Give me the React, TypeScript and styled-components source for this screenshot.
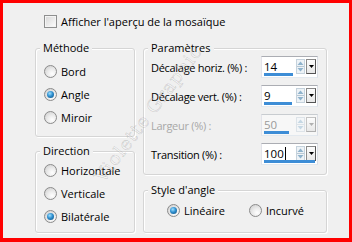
import React, {FC, ReactElement} from 'react';
import styled, {createGlobalStyle} from 'styled-components';

const GlobalStyle = createGlobalStyle`
html, body {
margin: 0;
padding: 0;
background: #f0f0f0;
}
* {
box-sizing: border-box;
}
`

const Frame = styled.div`
position: relative;
width: 352px;
height: 242px;
border: 3px solid #ff0000;
border-bottom-width: 4px;
background: #f0f0f0;
padding: 10px 0 0 32px;
overflow: hidden;
font-family: 'Open Sans', 'Noto Sans', sans-serif;
font-size: 11px;
color: #000;`

const TopRow = styled.label`
display: flex;
align-items: center;
gap: 4px;
height: 16px;
margin-left: 9px;`

const CheckBox = styled.span`
width: 13px;
height: 13px;
border: 1px solid #8e8f8f;
background: linear-gradient(135deg, #d6d6d6 0%, #f0f0f0 65%, #ffffff 100%);
box-shadow: inset 0 0 0 1px #f4f4f4;`

const Body = styled.div`
display: flex;
gap: 8px;
margin-top: 19px;`

const Column = styled.div<{$width: number; $gap: number}>`
display: flex;
flex-direction: column;
width: ${p => p.$width}px;
gap: ${p => p.$gap}px;`

const Group = styled.div<{$height: number; $pad: string}>`
position: relative;
flex-shrink: 0;
height: ${p => p.$height}px;
padding: ${p => p.$pad};
border: 1px solid #d5d5d5;
border-radius: 3px;
box-shadow: 1px 1px 0 #ffffff, inset 1px 1px 0 #ffffff;`

const GroupTitle = styled.span`
position: absolute;
top: -9px;
left: 4px;
padding: 0 3px;
line-height: 16px;
background: #f0f0f0;`

const RadioRow = styled.label<{$width?: number}>`
display: flex;
align-items: center;
gap: 4px;
height: 23px;
width: ${p => (p.$width ? `${p.$width}px` : 'auto')};`

const RadioCircle = styled.span<{$checked?: boolean}>`
position: relative;
width: 13px;
height: 13px;
border-radius: 50%;
border: 1px solid #8b8b8b;
background: radial-gradient(circle at 65% 70%, #ffffff 0%, #eaeaea 45%, #c9c9c9 100%);
flex-shrink: 0;

&::after {
content: '';
display: ${p => (p.$checked ? 'block' : 'none')};
position: absolute;
left: 2px;
top: 2px;
width: 7px;
height: 7px;
border-radius: 50%;
background: radial-gradient(circle at 40% 35%, #9fe0ff 0%, #2f8fcf 45%, #0b4a78 100%);
}`

const StyleRow = styled.div`
display: flex;`

const ParamGrid = styled.div`
display: grid;
grid-template-columns: 110px 57px;
row-gap: 7px;
align-items: center;`

const ParamLabel = styled.span<{$disabled?: boolean}>`
letter-spacing: -0.3px;
color: ${p => (p.$disabled ? '#a8a8a8' : '#000')};`

const SpinBox = styled.div<{$disabled?: boolean}>`
display: flex;
height: 22px;
border: 1px solid ${p => (p.$disabled ? '#c8ccd0' : '#abadb3')};
border-left-color: #e2e3ea;
border-right-color: #dbdfe6;
border-bottom-color: #e3e9ef;
background: ${p => (p.$disabled ? '#f7f7f7' : '#ffffff')};`

const ValueArea = styled.div<{$disabled?: boolean}>`
position: relative;
flex: 1;
padding: 3px 0 0 2px;
line-height: 14px;
font-size: 11.5px;
color: ${p => (p.$disabled ? '#9a9a9a' : '#000')};`

const Caret = styled.span`
display: inline-block;
width: 1px;
height: 13px;
margin-left: 1px;
background: #000;
vertical-align: -2px;`

const Track = styled.div`
position: absolute;
left: 2px;
bottom: 1px;
height: 3px;
background: #3d8dd6;`

const Arrows = styled.div`
display: flex;
align-items: center;
gap: 1px;
padding: 0 1px 2px 0;`

const DropButton = styled.div<{$disabled?: boolean}>`
display: flex;
align-items: center;
justify-content: center;
width: 10px;
height: 15px;
border: 1px solid ${p => (p.$disabled ? '#c4c4c4' : '#8a8a8a')};
border-right-color: ${p => (p.$disabled ? '#b0b0b0' : '#555')};
border-bottom-color: ${p => (p.$disabled ? '#b0b0b0' : '#555')};
background: linear-gradient(#fcfcfc, #e8e8e8);`

const Watermark = styled.div`
position: absolute;
left: 55px;
top: 100px;
width: 180px;
text-align: center;
transform: rotate(-53deg);
font-family: 'DejaVu Serif', serif;
font-size: 18px;
letter-spacing: 1px;
color: rgba(255, 255, 255, 0.25);
-webkit-text-stroke: 0.6px rgba(0, 0, 0, 0.16);
pointer-events: none;
white-space: nowrap;`

const Radio: FC<{label: string; checked?: boolean; width?: number}> = ({label, checked, width}): ReactElement => (
    <RadioRow $width={width}>
        <RadioCircle $checked={checked}/>
        <span>{label}</span>
    </RadioRow>
)

const Spin: FC<{value: number; min: number; max: number; disabled?: boolean; caret?: boolean}> = ({value, min, max, disabled, caret}): ReactElement => {
    const fill = Math.round(((value - min) / (max - min)) * 51)
    const arrow = disabled ? '#c6d8e4' : '#8fb3cc'
    return (
        <SpinBox $disabled={disabled}>
            <ValueArea $disabled={disabled}>
                {value}{caret && <Caret/>}
                <Track style={{width: fill}}/>
            </ValueArea>
            <Arrows>
                <svg width="9" height="15" viewBox="0 0 9 15">
                    <rect x="0.5" y="0.5" width="8" height="14" fill={disabled ? '#f4f6f8' : '#eef3f7'} stroke={disabled ? '#dde3e8' : '#c5d2dc'}/>
                    <path d="M1.5 6 L4.5 2.5 L7.5 6 Z" fill={arrow}/>
                    <path d="M1.5 9 L4.5 12.5 L7.5 9 Z" fill={arrow}/>
                    <line x1="1" y1="7.5" x2="8" y2="7.5" stroke={disabled ? '#dde3e8' : '#b8c8d4'}/>
                </svg>
                <DropButton $disabled={disabled}>
                    <svg width="5" height="3" viewBox="0 0 5 3">
                        <path d="M0 0 L5 0 L2.5 3 Z" fill={disabled ? '#b0b0b0' : '#000'}/>
                    </svg>
                </DropButton>
            </Arrows>
        </SpinBox>
    )
}

const App: FC = (): ReactElement => {
    return (
        <Frame>
            <GlobalStyle/>
            <TopRow>
                <CheckBox/>
                <span>Afficher l'aperçu de la mosaïque</span>
            </TopRow>
            <Body>
                <Column $width={100} $gap={14}>
                    <Group $height={89} $pad="11px 0 0 8px">
                        <GroupTitle>Méthode</GroupTitle>
                        <Radio label="Bord"/>
                        <Radio label="Angle" checked/>
                        <Radio label="Miroir"/>
                    </Group>
                    <Group $height={82} $pad="7px 0 0 8px">
                        <GroupTitle>Direction</GroupTitle>
                        <Radio label="Horizontale"/>
                        <Radio label="Verticale"/>
                        <Radio label="Bilatérale" checked/>
                    </Group>
                </Column>
                <Column $width={184} $gap={15}>
                    <Group $height={127} $pad="7px 0 0 7px">
                        <GroupTitle>Paramètres</GroupTitle>
                        <ParamGrid>
                            <ParamLabel>Décalage horiz. (%) :</ParamLabel>
                            <Spin value={14} min={-100} max={100}/>
                            <ParamLabel>Décalage vert. (%) :</ParamLabel>
                            <Spin value={9} min={-100} max={100}/>
                            <ParamLabel $disabled>Largeur (%) :</ParamLabel>
                            <Spin value={50} min={1} max={100} disabled/>
                            <ParamLabel>Transition (%) :</ParamLabel>
                            <Spin value={100} min={0} max={100} caret/>
                        </ParamGrid>
                    </Group>
                    <Group $height={43} $pad="8px 0 0 23px">
                        <GroupTitle>Style d'angle</GroupTitle>
                        <StyleRow>
                            <Radio label="Linéaire" checked width={82}/>
                            <Radio label="Incurvé"/>
                        </StyleRow>
                    </Group>
                </Column>
            </Body>
            <Watermark>Violette Graphic</Watermark>
        </Frame>
    )
}
export default App;
